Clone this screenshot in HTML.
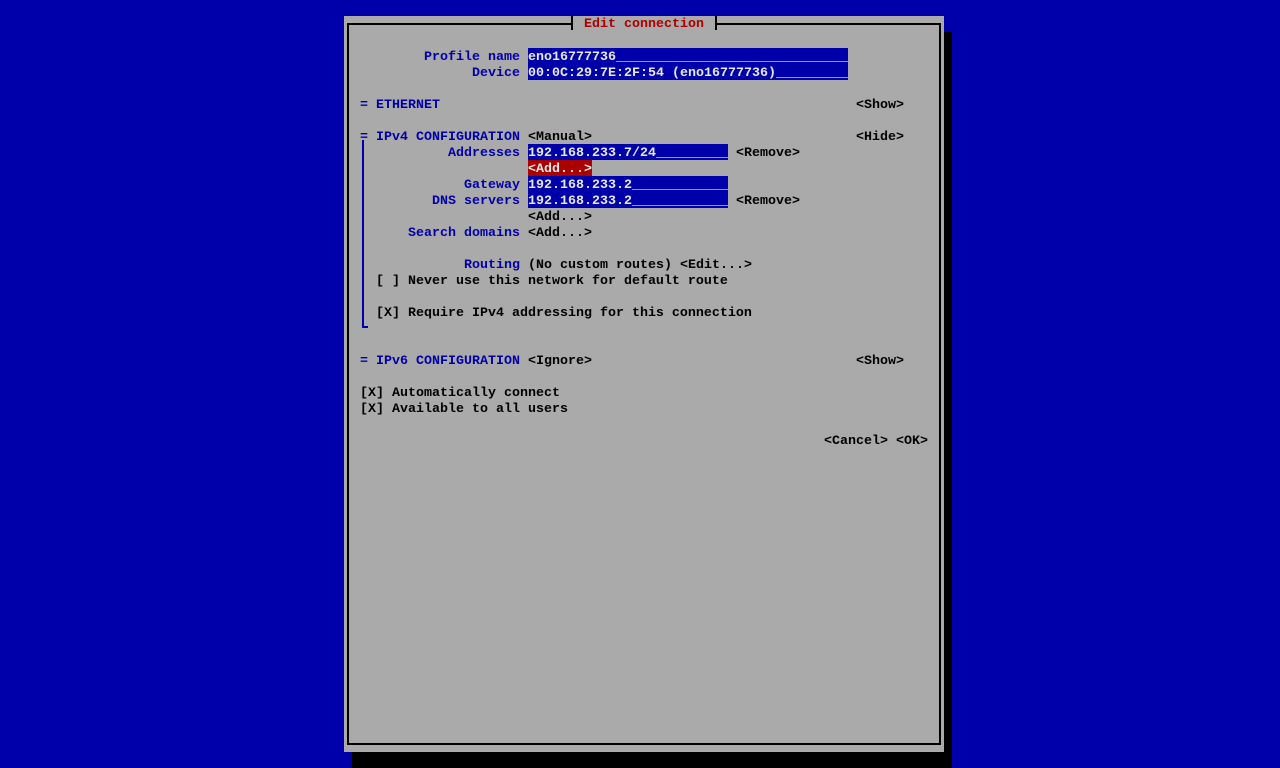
<!DOCTYPE html>
<html><head><style>
html,body{margin:0;padding:0;width:1280px;height:768px;overflow:hidden;background:#0000aa;}
.t{position:absolute;font-family:"Liberation Mono",monospace;font-size:13.33px;line-height:16px;height:16px;white-space:pre;color:#000;font-weight:bold;padding-top:2px;height:14px;}
.b{color:#0000aa}.r{color:#aa0000}
.f{background:#0000aa;color:#e8e8e8}
.a{background:#aa0000;color:#e8e8e8}
.box{position:absolute}
</style></head><body>
<div class="box" style="left:352px;top:32px;width:600px;height:736px;background:#000"></div>
<div class="box" style="left:344px;top:16px;width:600px;height:736px;background:#aaaaaa"></div>
<div class="box" style="left:347px;top:23px;width:590px;height:718px;border:2px solid #000"></div>
<div class="box" style="left:571px;top:16px;width:146px;height:16px;background:#aaaaaa"></div>
<div class="box" style="left:571px;top:16px;width:2px;height:14px;background:#000"></div>
<div class="box" style="left:715px;top:16px;width:2px;height:14px;background:#000"></div>
<div class="t r" style="left:584px;top:15px">Edit connection</div>
<div class="box" style="left:362px;top:140px;width:2px;height:188px;background:#0000aa"></div>
<div class="box" style="left:362px;top:326px;width:6px;height:2px;background:#0000aa"></div>

<div class="t b" style="left:424px;top:48px">Profile name</div>
<div class="t f" style="left:528px;top:48px">eno16777736_____________________________</div>
<div class="t b" style="left:472px;top:64px">Device</div>
<div class="t f" style="left:528px;top:64px">00:0C:29:7E:2F:54 (eno16777736)_________</div>
<div class="t b" style="left:360px;top:96px">= ETHERNET</div>
<div class="t" style="left:856px;top:96px">&lt;Show&gt;</div>
<div class="t b" style="left:360px;top:128px">= IPv4 CONFIGURATION</div>
<div class="t" style="left:528px;top:128px">&lt;Manual&gt;</div>
<div class="t" style="left:856px;top:128px">&lt;Hide&gt;</div>
<div class="t b" style="left:448px;top:144px">Addresses</div>
<div class="t f" style="left:528px;top:144px">192.168.233.7/24_________</div>
<div class="t" style="left:736px;top:144px">&lt;Remove&gt;</div>
<div class="t a" style="left:528px;top:160px">&lt;Add...&gt;</div>
<div class="t b" style="left:464px;top:176px">Gateway</div>
<div class="t f" style="left:528px;top:176px">192.168.233.2____________</div>
<div class="t b" style="left:432px;top:192px">DNS servers</div>
<div class="t f" style="left:528px;top:192px">192.168.233.2____________</div>
<div class="t" style="left:736px;top:192px">&lt;Remove&gt;</div>
<div class="t" style="left:528px;top:208px">&lt;Add...&gt;</div>
<div class="t b" style="left:408px;top:224px">Search domains</div>
<div class="t" style="left:528px;top:224px">&lt;Add...&gt;</div>
<div class="t b" style="left:464px;top:256px">Routing</div>
<div class="t" style="left:528px;top:256px">(No custom routes) &lt;Edit...&gt;</div>
<div class="t" style="left:376px;top:272px">[ ] Never use this network for default route</div>
<div class="t" style="left:376px;top:304px">[X] Require IPv4 addressing for this connection</div>
<div class="t b" style="left:360px;top:352px">= IPv6 CONFIGURATION</div>
<div class="t" style="left:528px;top:352px">&lt;Ignore&gt;</div>
<div class="t" style="left:856px;top:352px">&lt;Show&gt;</div>
<div class="t" style="left:360px;top:384px">[X] Automatically connect</div>
<div class="t" style="left:360px;top:400px">[X] Available to all users</div>
<div class="t" style="left:824px;top:432px">&lt;Cancel&gt; &lt;OK&gt;</div>
</body></html>
